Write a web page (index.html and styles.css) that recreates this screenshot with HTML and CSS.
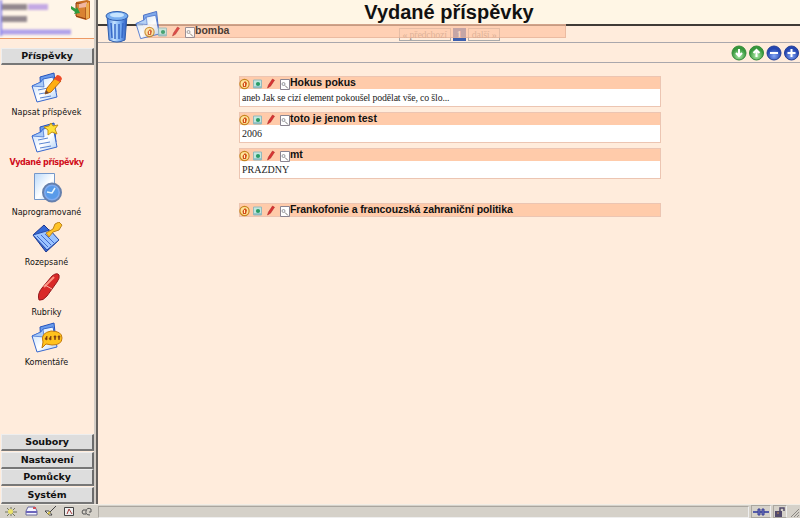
FILE: index.html
```html
<!DOCTYPE html>
<html lang="cs">
<head>
<meta charset="utf-8">
<title>Vydané příspěvky</title>
<link rel="stylesheet" href="styles.css">
</head>
<body>
<svg class="defs" aria-hidden="true">
  <defs>
    <linearGradient id="paper" x2="1" y2="1"><stop stop-color="#b9d9fb"/><stop offset=".55" stop-color="#fff"/><stop offset="1" stop-color="#a9ccf5"/></linearGradient>
    <linearGradient id="bin"><stop stop-color="#3f78dc"/><stop offset=".35" stop-color="#c4e3ff"/><stop offset=".65" stop-color="#78aef4"/><stop offset="1" stop-color="#2856bd"/></linearGradient>
    <radialGradient id="green" cy=".7"><stop stop-color="#b2edaa"/><stop offset="1" stop-color="#37983c"/></radialGradient>
    <radialGradient id="blue" cy=".7"><stop stop-color="#86a8f6"/><stop offset="1" stop-color="#2445b0"/></radialGradient>
    <symbol id="doc" viewBox="0 0 32 32">
      <path d="M9 5L23 1l2 19-15 5z" fill="#6b9dec" stroke="#2552bd"/>
      <path d="M1 14l9-4 2-3 10-2 4 20-20 5z" fill="url(#paper)" stroke="#3868ce"/>
      <path d="M1 14l9-4 2-3 1 8z" fill="#a9cbf8" stroke="#3868ce" stroke-width=".7"/>
    </symbol>
    <symbol id="tools" viewBox="0 0 52 13">
      <circle cx="5.500" cy="7" r="4.600" fill="#ffe49b" stroke="#c78520" stroke-width="1.200"/><path d="M6 4l2 2-1 4H4l-.5-3z" fill="#d4501c"/><path d="M5.500 6v3" stroke="#fff3c0"/>
      <path d="M14.500 3h8v8h-8z" fill="#c2e7df" stroke="#95b9bc"/><circle cx="19" cy="7" r="2.100" fill="#299b66"/><path d="M15 10h7" stroke="#6fa6b5"/>
      <path d="M28.500 11l1-3 4-6 2 1.200-4 6z" fill="#d93434" stroke="#a52222" stroke-width=".5"/>
      <path d="M41.500 2.500h9v10h-9z" fill="#fff" stroke="#8a8490"/><circle cx="44.500" cy="7" r="1.500" fill="#eef5ff" stroke="#999"/><path d="M46 8.500l3 3" stroke="#777"/>
    </symbol>
  </defs>
</svg>
<div class="app">
  <aside class="sidebar">
    <div class="account">
      <svg class="redacted" width="71" height="37" viewBox="0 0 71 37" aria-hidden="true"><path d="M0 0h2v36H0z" fill="#8d88ee"/><path d="M2 7h25M2 19h25" stroke="#93888f" stroke-width="6"/><path d="M28 7h20" stroke="#c4a9e4" stroke-width="6"/><path d="M2 32h69" stroke="#afa0ea" stroke-width="5"/></svg>
      <svg class="door" width="20" height="21" viewBox="0 0 20 21"><path d="M5 2l11-2 3 1v17l-4 2-10-3z" fill="#c96d20"/><path d="M5 3l10 1v15L5 16z" fill="#d98232" stroke="#8e3c12"/><path d="M8 4l8-2v5l-8 1z" fill="#f1b6a0"/><path d="M15 4l3-2v16l-3 1z" fill="#edac50"/><path d="M0 6l5 3 1-2 3 6-6 1 1-2-4-3z" fill="#2f9b3e"/></svg>
    </div>
    <div class="tab first">Příspěvky</div>
    <nav class="menu">
      <a class="item"><svg width="32" height="32" viewBox="0 0 32 32"><use href="#doc" width="32" height="32"/><path d="M7 18l10-2M8 22l11-2M9 26l11-2" stroke="#5a86d2"/><path d="M14 22l2-6L25 5l5 4-10 11z" fill="#ffae13" stroke="#b96a12"/><path d="M23 7l3-4q4 0 5 4l-2 3z" fill="#ee4b29"/><path d="M14 22l1-4 3 3z" fill="#714834"/></svg><span>Napsat příspěvek</span></a>
      <a class="item active"><svg width="32" height="32" viewBox="0 0 32 32"><use href="#doc" width="32" height="32"/><path d="M7 18l10-2M8 22l11-2M9 26l11-2" stroke="#5a86d2"/><path d="M20 1l2 3 5-1-3 4 2 5-5-2-4 3v-5l-4-3 5-1z" fill="#ffe03a" stroke="#c49013"/></svg><span>Vydané příspěvky</span></a>
      <a class="item"><svg width="32" height="32" viewBox="0 0 32 32"><path d="M3.500 1.500h20v26h-20z" fill="url(#paper)" stroke="#7598ca"/><circle cx="21" cy="20.500" r="9" fill="#7daaf0" stroke="#6680ad" stroke-width="2"/><circle cx="21" cy="20.500" r="6.500" fill="#599be9"/><path d="M16 20l5 1 3-5" fill="none" stroke="#e5f6ff" stroke-width="1.500"/></svg><span>Naprogramované</span></a>
      <a class="item"><svg width="32" height="32" viewBox="0 0 32 32"><path d="M2 13L13 3l15 15-13 12z" fill="#3569d7" stroke="#1d378d"/><path d="M2 13l17-5 9 10-12 10z" fill="#9cc4ff" stroke="#284ca9"/><path d="M6 14l11 11M10 13l10 10M14 12l9 9" stroke="#406bce"/><path d="M15 11l7-4 2-5 4-2 3 3-3 5-6 2-4 5z" fill="#ffc428" stroke="#bc831d"/></svg><span>Rozepsané</span></a>
      <a class="item"><svg width="32" height="32" viewBox="0 0 32 32"><path d="M8 28q-2-6 3-12L21 4q5-4 7-1 1 3-2 7L16 24q-4 5-8 4z" fill="#d92928" stroke="#951b20"/><path d="M13 15L23 5" stroke="#ff9380" stroke-width="2"/><path d="M14 13l7 4" stroke="#f5b8a9"/></svg><span>Rubriky</span></a>
      <a class="item"><svg width="32" height="32" viewBox="0 0 32 32"><use href="#doc" width="32" height="32"/><path d="M15 22l-4 4 1-6q-3-9 8-11 11 0 11 7 0 7-10 7z" fill="#ffc21d" stroke="#c47a0b"/><path d="M14 17l2-3v4zM18 17l2-3v4zM23 14h2l-1 4zM27 14h2l-1 4z" fill="#7b3e12" stroke="#7b3e12" stroke-width=".7"/></svg><span>Komentáře</span></a>
    </nav>
    <div class="tabs">
      <div class="tab">Soubory</div><div class="tab">Nastavení</div><div class="tab">Pomůcky</div><div class="tab">Systém</div>
    </div>
  </aside>
  <main class="main">
    <header class="heading"><h1>Vydané příspěvky</h1></header>
    <div class="pager"><span>« předchozí</span><b>1</b><span>další »</span></div>
    <div class="actions">
      <svg width="68" height="16" viewBox="0 0 68 16"><g stroke-width="1"><circle cx="8" cy="8" r="7" fill="url(#green)" stroke="#358a3a"/><circle cx="25.500" cy="8" r="7" fill="url(#green)" stroke="#358a3a"/><circle cx="43" cy="8" r="7" fill="url(#blue)" stroke="#243f97"/><circle cx="60.500" cy="8" r="7" fill="url(#blue)" stroke="#243f97"/></g><path d="M8 4v7M5 8l3 3 3-3M25.500 12V5M22.500 8l3-3 3 3M39 8h8M56.500 8h8M60.500 4v8" fill="none" stroke="#fff" stroke-width="2"/></svg>
    </div>
    <section class="posts">
      <article class="post"><h2><svg class="tools"><use href="#tools"/></svg><span>Hokus pokus</span></h2><p class="narrow">aneb Jak se cizí element pokoušel podělat vše, co šlo...</p></article>
      <article class="post"><h2><svg class="tools"><use href="#tools"/></svg><span>toto je jenom test</span></h2><p>2006</p></article>
      <article class="post"><h2><svg class="tools"><use href="#tools"/></svg><span>mt</span></h2><p>PRAZDNY</p></article>
      <article class="post last"><h2><svg class="tools"><use href="#tools"/></svg><span>Frankofonie a francouzská zahraniční politika</span></h2></article>
    </section>
    <svg class="trash" width="24" height="33" viewBox="0 0 24 33"><path d="M2 6h20l-2 24q-8 4-16 0z" fill="url(#bin)" stroke="#315fae"/><path d="M6 13l1 15M10 14v15M14 14v15M18 13l-1 15" stroke="#376ac8" stroke-width="1.500"/><ellipse cx="12" cy="6" rx="11" ry="4.500" fill="#78aef0" stroke="#315fae"/><ellipse cx="12" cy="5" rx="7" ry="2.300" fill="#c6e4ff"/></svg>
    <div class="dragged"><svg class="tools"></svg><span>bomba</span></div>
    <svg class="drop" width="30" height="31" viewBox="0 0 32 32"><use href="#doc" width="32" height="32"/></svg>
    <svg class="tools drag-tools"><use href="#tools"/></svg>
  </main>
</div>
<footer class="status">
  <svg class="apps" width="96" height="14" viewBox="0 0 96 14"><path d="M5 8h12M11 3v9M7 4l8 8M15 4l-8 8" stroke="#77785c"/><circle cx="10.500" cy="7.500" r="2.500" fill="#ece36b"/><path d="M26 7l2-4h7l2 4v4H26z" fill="#f4f4ff" stroke="#69699b"/><path d="M26 8h11" stroke="#6c65bc" stroke-width="2"/><path d="M33 4h3" stroke="#d35259" stroke-width="2"/><path d="M45 7l4 4h3l-3-4zM49 9l7-7" fill="#fff" stroke="#444"/><path d="M48 10l2-2" stroke="#d4bd40" stroke-width="2"/><path d="M64.500 3.500h9v8h-9z" fill="#eee" stroke="#444"/><path d="M67 10l2-5 3 5" fill="none" stroke="#a33b3b"/><path d="M86 6q-4-1-4 2t4 2M91 5q-4-2-5 2t4 4M89 8h2V5" fill="none" stroke="#555"/></svg>
  <div class="message"></div>
  <div class="indicator"><svg width="18" height="12" viewBox="0 0 18 12"><path d="M1 6h16" stroke="#555ca9" stroke-width="2"/><path d="M6 3h2v6H6zM10 3h2v6h-2z" fill="#7378cc" stroke="#3b4090"/></svg></div>
  <div class="indicator lock"><svg width="12" height="12" viewBox="0 0 12 12"><path d="M1 5h7v6H1z" fill="#51496b"/><path d="M6 5V2h4v3" fill="none" stroke="#51496b" stroke-width="1.500"/><path d="M3 7h2" stroke="#bd8950"/></svg></div>
  <svg class="grip" width="9" height="12" viewBox="0 0 9 12"><path d="M0 11l8-8M3 11l5-5M6 11l2-2" stroke="#8b8883"/></svg>
</footer>
</body>
</html>
```
FILE: styles.css
```css
* { box-sizing: border-box; }
body { margin: 0; width: 800px; height: 518px; overflow: hidden; background: #ffecdc; color: #111; font-family: "Liberation Sans", Arial, sans-serif; }
.defs { position: absolute; width: 0; height: 0; }
.app { display: flex; height: 504px; }
.sidebar { width: 98px; display: flex; flex-direction: column; border-right: 2px solid #66625f; box-shadow: inset -2px 0 #d4cec7; }
.account { height: 39px; width: 94px; display: flex; flex: none; background: #fff5e8; border-bottom: 1px solid #ed9a66; }
.redacted { filter: blur(1.2px); flex: none; }
.door { flex: none; }
.tab { height: 17px; margin-left: 1px; width: 93px; background: #ddd; border: 1px solid #eee; border-right: 2px solid #6c6c6c; border-bottom: 2px solid #777; font: bold 9.500px/13px "DejaVu Sans", sans-serif; letter-spacing: -.1px; text-align: center; flex: none; }
.first { margin-top: 9px; }
.menu { padding-top: 7px; width: 93px; }
.item { height: 50px; display: flex; flex-direction: column; align-items: center; font: 8px/10px "DejaVu Sans", sans-serif; white-space: nowrap; }
.item svg { display: block; flex: none; margin-bottom: 4px; }
.active { color: #d00b19; font-weight: bold; }
.active span { letter-spacing: -.4px; }
.tabs { margin: auto 0 .5px; display: grid; gap: .5px; }
.main { width: 702px; position: relative; }
.heading { height: 26px; background: #fff6e5; border-bottom: 2px solid #403b36; }
h1 { margin: 0; font-size: 20px; line-height: 24px; text-align: center; }
.pager { height: 17px; padding: 2px 0 0 1px; display: flex; justify-content: center; gap: 2px; border-bottom: 1px solid #aaa7ac; font: 10px/11px "Liberation Serif", serif; }
.pager span { height: 13px; padding: 0 3px; border: 1px solid #aaa; color: #8d8582; letter-spacing: -.25px; }
.pager b { width: 13px; height: 13px; background: #3c5fae; color: #fff; text-align: center; line-height: 13px; }
.actions { height: 20px; display: flex; justify-content: flex-end; padding: 2px 1px 0 0; border-bottom: 1px solid #aaa7ac; }
.posts { width: 422px; margin: 13px 0 0 141px; }
.post { height: 31px; margin-bottom: 5px; background: #fff; border: 1px solid #ecc5b2; }
.post h2 { height: 12px; margin: 0; display: flex; background: #ffcbaa; font-size: 10.500px; line-height: 11px; white-space: nowrap; }
.tools { width: 52px; height: 13px; overflow: visible; flex: none; }
.post .tools { margin: 0 -1px 0 -1px; }
.post p { margin: 0; padding: 1px 0 0 2px; font: 10px/15px "Liberation Serif", serif; color: #222; }
.post .narrow { font-size: 9.800px; letter-spacing: -.13px; }
.post.last { height: 14px; margin-top: 24px; background: #ffcbaa; }
.last h2 span { letter-spacing: -.11px; }
.trash { position: absolute; left: 7px; top: 10px; }
.drop { position: absolute; left: 37px; top: 10px; opacity: .85; }
.dragged { position: absolute; left: 45px; top: 24px; width: 423px; height: 14px; display: flex; background: rgba(255, 196, 163, .7); border: 1px solid rgba(218, 169, 145, .55); font-size: 10.500px; font-weight: bold; line-height: 11px; color: #4b3c36; }
.dragged .tools { margin-right: -1px; }
.drag-tools { position: absolute; left: 46px; top: 25px; opacity: .85; }
.status { height: 14px; display: flex; background: #d5d1c9; border-top: 1px solid #f1ede5; }
.apps { flex: none; margin-top: -1px; }
.message { flex: 1; margin: 1px 1px 0 2px; border: 1px solid #aaa69f; border-right-color: #eee; border-bottom-color: #eee; }
.indicator { width: 20px; margin: 0 1px; border: 1px solid #aaa69f; border-right-color: #eee; }
.indicator svg { display: block; }
.lock { width: 14px; margin-right: 4px; }
.grip { margin-top: 1px; }
```
